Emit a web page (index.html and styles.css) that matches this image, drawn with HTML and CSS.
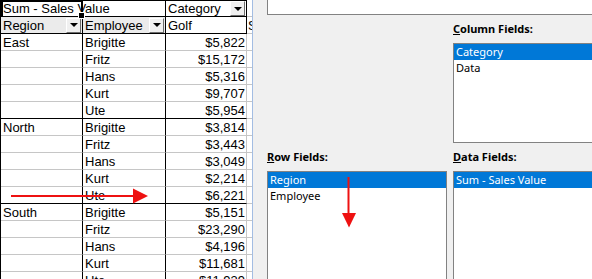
FILE: index.html
```html
<!DOCTYPE html>
<html lang="en">
<head>
  <meta charset="UTF-8" />
  <title>PivotTable Layout</title>
  <link rel="stylesheet" href="styles.css">
</head>
<body>
  <div class="window">
    <div class="sheet">
      <div class="row">
        <div class="cell col-a head top sel-cell">Sum - Sales Value<span class="fill-handle"></span></div>
        <div class="cell col-b head top see-through"></div>
        <div class="cell col-c head top field">Category<span class="drop"></span></div>
        <div class="cell col-d"></div>
      </div>
      <div class="row">
        <div class="cell col-a head field gray">Region<span class="drop"></span></div>
        <div class="cell col-b head field gray">Employee<span class="drop"></span></div>
        <div class="cell col-c head">Golf</div>
        <div class="cell col-d">Shoes</div>
      </div>

      <div class="row"><div class="cell col-a">East</div><div class="cell col-b">Brigitte</div><div class="cell col-c num">$5,822</div><div class="cell col-d"></div></div>
      <div class="row"><div class="cell col-a"></div><div class="cell col-b">Fritz</div><div class="cell col-c num">$15,172</div><div class="cell col-d"></div></div>
      <div class="row"><div class="cell col-a"></div><div class="cell col-b">Hans</div><div class="cell col-c num">$5,316</div><div class="cell col-d"></div></div>
      <div class="row"><div class="cell col-a"></div><div class="cell col-b">Kurt</div><div class="cell col-c num">$9,707</div><div class="cell col-d"></div></div>
      <div class="row group-end"><div class="cell col-a"></div><div class="cell col-b">Ute</div><div class="cell col-c num">$5,954</div><div class="cell col-d"></div></div>

      <div class="row"><div class="cell col-a">North</div><div class="cell col-b">Brigitte</div><div class="cell col-c num">$3,814</div><div class="cell col-d"></div></div>
      <div class="row"><div class="cell col-a"></div><div class="cell col-b">Fritz</div><div class="cell col-c num">$3,443</div><div class="cell col-d"></div></div>
      <div class="row"><div class="cell col-a"></div><div class="cell col-b">Hans</div><div class="cell col-c num">$3,049</div><div class="cell col-d"></div></div>
      <div class="row"><div class="cell col-a"></div><div class="cell col-b">Kurt</div><div class="cell col-c num">$2,214</div><div class="cell col-d"></div></div>
      <div class="row group-end"><div class="cell col-a"></div><div class="cell col-b">Ute</div><div class="cell col-c num">$6,221</div><div class="cell col-d"></div></div>

      <div class="row"><div class="cell col-a">South</div><div class="cell col-b">Brigitte</div><div class="cell col-c num">$5,151</div><div class="cell col-d"></div></div>
      <div class="row"><div class="cell col-a"></div><div class="cell col-b">Fritz</div><div class="cell col-c num">$23,290</div><div class="cell col-d"></div></div>
      <div class="row"><div class="cell col-a"></div><div class="cell col-b">Hans</div><div class="cell col-c num">$4,196</div><div class="cell col-d"></div></div>
      <div class="row"><div class="cell col-a"></div><div class="cell col-b">Kurt</div><div class="cell col-c num">$11,681</div><div class="cell col-d"></div></div>
      <div class="row group-end"><div class="cell col-a"></div><div class="cell col-b">Ute</div><div class="cell col-c num">$11,939</div><div class="cell col-d"></div></div>
    </div>

    <div class="dialog">
      <div class="top-box"></div>
      <div class="fields">
        <div></div>
        <div class="label"><u>C</u>olumn Fields:</div>
        <div></div>
        <ul class="list list-col">
          <li class="sel">Category</li>
          <li>Data</li>
        </ul>
        <div class="label"><u>R</u>ow Fields:</div>
        <div class="label"><u>D</u>ata Fields:</div>
        <ul class="list list-low">
          <li class="sel">Region</li>
          <li>Employee</li>
        </ul>
        <ul class="list list-low">
          <li class="sel">Sum - Sales Value</li>
        </ul>
      </div>
    </div>

    <!-- red hint arrows drawn on top of everything -->
    <svg class="arrows" width="592" height="279" viewBox="0 0 592 279">
      <line x1="11" y1="196" x2="135" y2="196" stroke="#ee1111" stroke-width="2" />
      <polygon points="133,188.5 148,196 133,203.5" fill="#ee1111" />
      <line x1="348.5" y1="177" x2="348.5" y2="214" stroke="#ee1111" stroke-width="2" />
      <polygon points="342,213 356,213 349,227.5" fill="#ee1111" />
    </svg>
  </div>
</body>
</html>
```

FILE: styles.css
```css
body {
  margin: 0;
  overflow: hidden;
}
.window {
  position: relative;
  display: flex;
  width: 592px;
  height: 279px;
  overflow: hidden;
}

/* spreadsheet */
.sheet {
  flex: none;
  width: 252px;
  background: white;
  border-right: 1px solid #a3bde3;
  font-family: "Liberation Sans", Arial, sans-serif;
  font-size: 13px;
  color: #000;
}
.row {
  display: grid;
  grid-template-columns: 82px 83px 81px 5px;
  border-left: 1px solid #000;
}
.cell {
  position: relative;
  box-sizing: border-box;
  height: 17px;
  padding: 1px 0 0 2px;
  line-height: 15px;
  white-space: nowrap;
  overflow: hidden;
  border-bottom: 1px solid #c6c6c6;
  border-right: 1px solid #000;
}
.col-c {
  border-right-color: #c6c6c6;
}
.col-c.head {
  border-right-color: #000;
}
.col-d {
  border-right: none;
  padding-left: 1px;
}
.head {
  border-bottom-color: #000;
}
.top {
  border-top: 1px solid #000;
  padding-top: 0;
}
.group-end .col-a,
.group-end .col-b,
.group-end .col-c {
  border-bottom-color: #000;
}
.num {
  text-align: right;
  padding-right: 1px;
}
.gray {
  background: #ebebeb;
}
.field {
  display: flex;
  justify-content: space-between;
  align-items: center;
  padding-top: 0;
  padding-right: 1px;
}
.drop {
  box-sizing: border-box;
  display: flex;
  align-items: center;
  justify-content: center;
  width: 15px;
  height: 15px;
  background: #f0f0f0;
  border: 1px solid;
  border-color: #fff #6d6d6d #6d6d6d #fff;
}
.drop::after {
  content: "";
  width: 0;
  height: 0;
  border-left: 4px solid transparent;
  border-right: 4px solid transparent;
  border-top: 4px solid #000;
}
.sel-cell {
  overflow: visible;
  z-index: 1;
  border-right: 2px solid #000;
  box-shadow: inset 2px 0 0 #000, inset 0 1px 0 #000;
}
.see-through {
  background: transparent;
}
.fill-handle {
  position: absolute;
  right: -4px;
  bottom: -3px;
  width: 5px;
  height: 5px;
  background: #000;
  border: 1px solid #fff;
}

/* pivot layout dialog */
.dialog {
  flex: 1;
  background: #f0f0f0;
  padding-left: 14px;
  font-family: "Noto Sans", sans-serif;
  font-size: 11px;
  color: #000;
}
.top-box {
  width: 400px;
  height: 14px;
  background: white;
  border: 1px solid #828282;
  border-top: none;
}
.fields {
  display: grid;
  grid-template-columns: 180px 200px;
  column-gap: 6px;
}
.label {
  padding-top: 6px;
  margin-bottom: 6px;
  line-height: 16px;
  font-weight: bold;
}
.list {
  box-sizing: border-box;
  margin: 0;
  padding: 0;
  list-style: none;
  background: white;
  border: 1px solid #828282;
}
.list-col {
  height: 100px;
  border-right: none;
}
.list-low {
  height: 130px;
}
.list li {
  height: 16px;
  line-height: 16px;
  padding-left: 2px;
}
.list li.sel {
  background: #0078d7;
  color: white;
}
.arrows {
  position: absolute;
  top: 0;
  left: 0;
  pointer-events: none;
}
```
